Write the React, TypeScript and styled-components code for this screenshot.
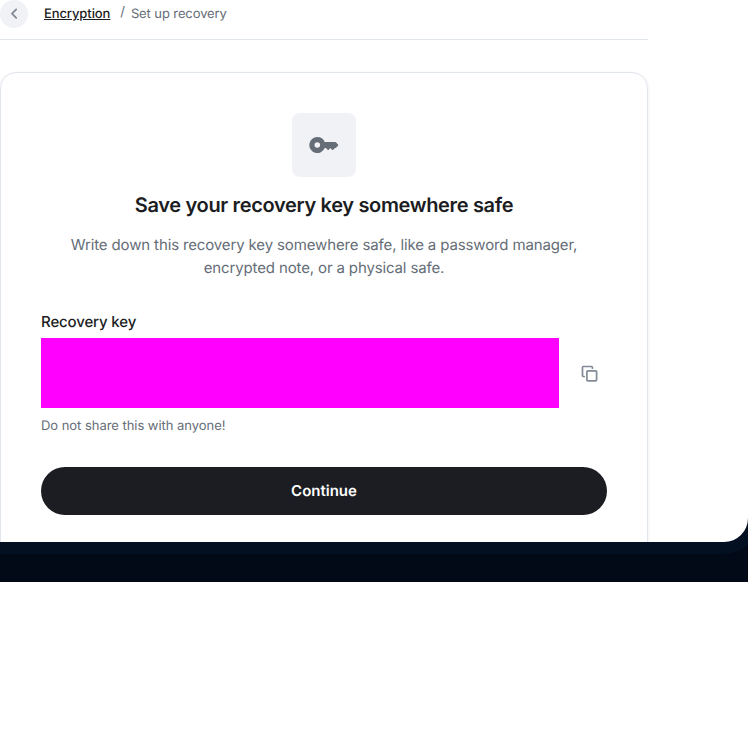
import React from "react";
import styled, { createGlobalStyle } from "styled-components";

const Global = createGlobalStyle`
  * { box-sizing: border-box; }
  body { margin: 0; background: #fff; font-family: Inter, sans-serif; color: #1b1d22; overflow: hidden; text-rendering: geometricPrecision; }
  h2, p { margin: 0; }
`;
const Backdrop = styled.div`
  height: 582px;
  background: #020a18;
  overflow: hidden;
`;
const Frame = styled.div`
  height: 554px;
  background: #021022;
  border-bottom-right-radius: 36px;
  margin-right: -12px;
  padding-right: 12px;
`;
const Dialog = styled.main`
  height: 542px;
  background: #fff;
  border-bottom-right-radius: 24px;
  overflow: hidden;
`;
const Content = styled.div`
  width: 648px;
`;
const Breadcrumb = styled.nav`
  height: 40px;
  border-bottom: 1px solid #e1e6ec;
  display: flex;
  align-items: flex-start;
  font-size: 13px;
  line-height: 28px;
  letter-spacing: -0.1px;
  color: #656d77;
`;
const BackButton = styled.button`
  width: 28px;
  height: 28px;
  padding: 0;
  border: 0;
  border-radius: 50%;
  background: #f0f2f5;
  display: grid;
  place-items: center;
  margin-right: 16px;
`;
const Crumb = styled.a`
  color: #1b1d22;
  font-weight: 500;
  text-decoration: underline;
`;
const Separator = styled.span`
  margin: 0 6px 0 10px;
  line-height: 25px;
`;
const Card = styled.section`
  margin-top: 32px;
  height: 560px;
  padding: 40px;
  border: 1px solid #e1e6ec;
  border-radius: 16px;
  box-shadow: 0 1px 3px rgba(27, 29, 34, 0.1);
  display: flex;
  flex-direction: column;
`;
const KeyTile = styled.div`
  width: 64px;
  height: 64px;
  border-radius: 8px;
  background: #f0f2f5;
  display: grid;
  place-items: center;
  align-self: center;
`;
const Title = styled.h2`
  margin-top: 14px;
  font-size: 20px;
  line-height: 28px;
  font-weight: 600;
  letter-spacing: -0.34px;
  text-align: center;
`;
const Description = styled.p`
  margin-top: 14px;
  font-size: 15px;
  line-height: 23px;
  letter-spacing: -0.135px;
  color: #656d77;
  text-align: center;
`;
const Label = styled.div`
  margin-top: 32px;
  font-size: 15px;
  line-height: 22px;
  letter-spacing: -0.135px;
  font-weight: 500;
`;
const KeyRow = styled.div`
  margin-top: 5px;
  display: flex;
  align-items: center;
`;
const KeyValue = styled.div`
  width: 518px;
  height: 70px;
  background: #f0f;
`;
const CopyButton = styled.button`
  margin-left: 20px;
  padding: 0;
  border: 0;
  background: none;
  width: 20px;
  height: 20px;
`;
const Hint = styled.p`
  margin-top: 8px;
  font-size: 13px;
  line-height: 20px;
  letter-spacing: -0.04px;
  color: #656d77;
`;
const Continue = styled.button`
  margin-top: 31px;
  flex: 0 0 48px;
  border: 0;
  border-radius: 24px;
  background: #1b1d22;
  color: #fff;
  font: 600 15px/24px Inter, sans-serif;
  text-rendering: inherit;
`;

export default function App() {
  return (
    <>
      <Global />
      <Backdrop>
        <Frame>
          <Dialog>
            <Content>
              <Breadcrumb>
                <BackButton aria-label="Back">
                  <svg width="28" height="28" viewBox="0 0 28 28" fill="none" stroke="#818a95" strokeWidth="1.8" strokeLinecap="round" strokeLinejoin="round">
                    <path d="m16.2 9.4-4.2 4.2 4.2 4.2" />
                  </svg>
                </BackButton>
                <Crumb>Encryption</Crumb>
                <Separator>/</Separator>
                <span>Set up recovery</span>
              </Breadcrumb>
              <Card>
                <KeyTile>
                  <svg width="32" height="32" viewBox="0 0 32 32" fill="#656d77" fillRule="evenodd">
                    <path d="M9.3 8a8 8 0 1 0 7.4 11H18l1.6 1.7q.6.6 1.2 0L22.4 19l1.6 1.7q.6.6 1.2 0L27 19h.8l2.2-2.2q.6-.7 0-1.4L28.2 13.4Q27.8 13 27.2 13H16.7A8 8 0 0 0 9.3 8m0 5.2a2.8 2.8 0 1 1 0 5.6 2.8 2.8 0 0 1 0-5.6" />
                  </svg>
                </KeyTile>
                <Title>Save your recovery key somewhere safe</Title>
                <Description>
                  Write down this recovery key somewhere safe, like a password manager,
                  <br />
                  encrypted note, or a physical safe.
                </Description>
                <Label>Recovery key</Label>
                <KeyRow>
                  <KeyValue />
                  <CopyButton aria-label="Copy recovery key">
                    <svg width="20" height="20" viewBox="0 0 20 20" fill="none" stroke="#818a95" strokeWidth="1.7" strokeLinejoin="round" strokeLinecap="round">
                      <path d="M5.2 13.5h-.9a.8.8 0 0 1-.8-.8V4.3a.8.8 0 0 1 .8-.8h8.3a.8.8 0 0 1 .8.8v.9" />
                      <rect x="7.9" y="7.9" width="9.7" height="9.9" rx="1" />
                    </svg>
                  </CopyButton>
                </KeyRow>
                <Hint>Do not share this with anyone!</Hint>
                <Continue>Continue</Continue>
              </Card>
            </Content>
          </Dialog>
        </Frame>
      </Backdrop>
    </>
  );
}
